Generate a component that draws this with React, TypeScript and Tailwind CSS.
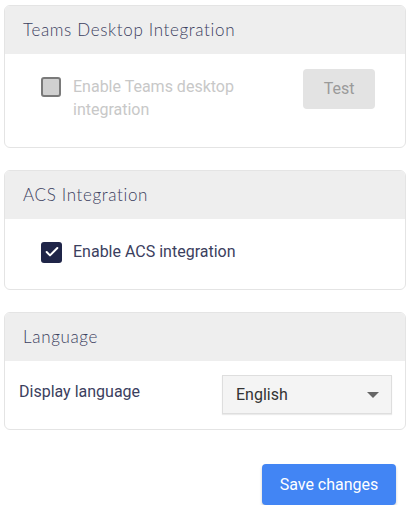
import { Check } from "lucide-react";

const heading = "font-['Lato','Noto_Sans',sans-serif] font-light text-[17px] tracking-[0.65px] text-[#3b405e]";
const body = "font-['Roboto','Liberation_Sans',sans-serif]";

function Card({ title, children, className = "" }: { title: string; children: React.ReactNode; className?: string }) {
  return (
    <section className={"overflow-hidden rounded-md border border-[#e4e4e4] bg-white " + className}>
      <div className="flex h-[48px] items-center bg-[#eeeeee] px-[18px]">
        <h2 className={heading}>{title}</h2>
      </div>
      {children}
    </section>
  );
}

export default function App() {
  return (
    <div className={"flex w-[409px] flex-col bg-white pl-[4px] pr-[3px] pt-[5px] " + body}>
      <Card title="Teams Desktop Integration" className="h-[143px]">
        <div className="flex items-start justify-between pl-[36px] pr-[30px] pt-[15px]">
          <label className="flex items-start gap-[12px]">
            <span className="mt-[8px] h-[20px] w-[20px] shrink-0 rounded-[3px] border-2 border-[#7a7a7a] bg-[#d0d0d0]" />
            <span className="w-[190px] text-[16px] leading-[23px] text-[#c8c8c8] pt-[6px]">
              Enable Teams desktop integration
            </span>
          </label>
          <button disabled className="h-[40px] w-[72px] rounded-[4px] bg-[#e3e3e3] text-[16px] text-[#9a9a9a]">
            Test
          </button>
        </div>
      </Card>

      <Card title="ACS Integration" className="mt-[22px] h-[120px]">
        <div className="flex items-center gap-[11px] pl-[36px] pt-[21px]">
          <span className="flex h-[21px] w-[21px] items-center justify-center rounded-[3px] bg-[#1f2548]">
            <Check className="h-[16px] w-[16px] text-white" strokeWidth={3} />
          </span>
          <span className="text-[16px] text-[#3b405e]">Enable ACS integration</span>
        </div>
      </Card>

      <Card title="Language" className="mt-[22px] h-[118px]">
        <div className="flex items-start justify-between pl-[14px] pr-[13px] pt-[14px]">
          <span className="pt-[5px] text-[16px] text-[#3b405e]">Display language</span>
          <div className="flex h-[39px] w-[170px] items-center justify-between border border-[#dedede] bg-[#f4f4f4] pl-[13px] pr-[12px] shadow-[0_1px_1px_rgba(0,0,0,0.08)]">
            <span className="text-[16px] text-[#333333]">English</span>
            <span className="h-0 w-0 border-x-[6px] border-t-[6px] border-x-transparent border-t-[#666666]" />
          </div>
        </div>
      </Card>

      <div className="flex justify-end pr-[10px] pt-[34px]">
        <button className="h-[41px] w-[134px] rounded-[4px] bg-[#4285f4] text-[16px] text-white shadow-[0_2px_3px_rgba(0,0,0,0.2)]">
          Save changes
        </button>
      </div>
    </div>
  );
}
